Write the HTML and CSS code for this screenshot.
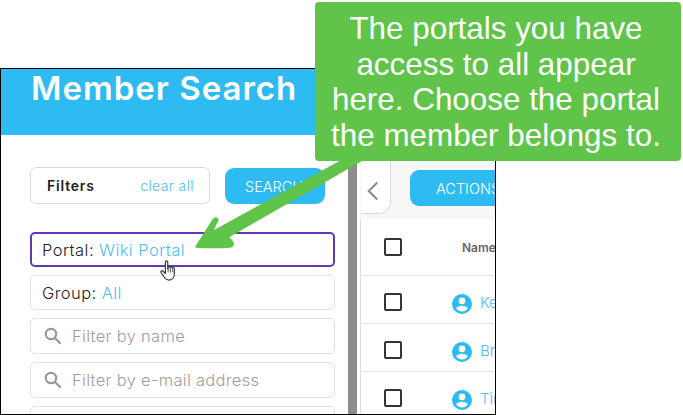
FILE: index.html
```html
<!DOCTYPE html>
<html lang="en">
<head>
    <meta charset="UTF-8">
    <title>Member Search</title>
    <link rel="stylesheet" href="styles.css">
</head>
<body>

    <!-- Recorte da aplicacao -->
    <div class="frame">
        <div class="left-panel">
            <div class="header"><h1>Member Search</h1></div>
            <div class="filters">
                <div class="filters-top">
                    <div class="filters-box">
                        <span class="filters-label">Filters</span>
                        <a href="#" class="clear-link">clear all</a>
                    </div>
                    <a href="#" class="button search-button">SEARCH</a>
                </div>
                <div class="field field-active">Portal: <span class="value">Wiki Portal</span></div>
                <div class="field">Group: <span class="value">All</span></div>
                <div class="field field-search">
                    <svg class="search-icon" viewBox="0 0 18 18"><circle cx="7" cy="7" r="5.2"/><path d="M11 11l5.6 5.6"/></svg>
                    Filter by name
                </div>
                <div class="field field-search">
                    <svg class="search-icon" viewBox="0 0 18 18"><circle cx="7" cy="7" r="5.2"/><path d="M11 11l5.6 5.6"/></svg>
                    Filter by e-mail address
                </div>
                <div class="field"></div>
            </div>
        </div>

        <div class="divider"></div>

        <div class="right-panel">
            <div class="toolbar">
                <div class="collapse-tab">
                    <svg viewBox="0 0 14 24"><path d="M12 2L2 12l10 10"/></svg>
                </div>
                <a href="#" class="button actions-button">ACTIONS</a>
            </div>
            <div class="row row-head">
                <span class="checkbox"></span>
                <span class="name-head">Name</span>
            </div>
            <div class="row">
                <span class="checkbox"></span>
                <svg class="avatar" viewBox="0 0 20 20"><use href="#avatar-icon"/></svg>
                <a href="#" class="member-link">Kevin</a>
            </div>
            <div class="row">
                <span class="checkbox"></span>
                <svg class="avatar" viewBox="0 0 20 20"><use href="#avatar-icon"/></svg>
                <a href="#" class="member-link">Brian</a>
            </div>
            <div class="row">
                <span class="checkbox"></span>
                <svg class="avatar" viewBox="0 0 20 20"><use href="#avatar-icon"/></svg>
                <a href="#" class="member-link">Tim</a>
            </div>
        </div>
    </div>

    <svg class="defs" width="0" height="0">
        <symbol id="avatar-icon" viewBox="0 0 20 20">
            <path fill="#2dbbf2" fill-rule="evenodd" d="M10 0a10 10 0 1 0 0 20a10 10 0 0 0 0-20zM10 3.600a3.300 3.300 0 1 1 0 6.600a3.300 3.300 0 0 1 0-6.600zM10 17.400c-2.600 0-4.800-1.200-6-3.100c.9-1.600 3.800-2.600 6-2.600s5.100 1 6 2.600c-1.200 1.900-3.400 3.100-6 3.100z"/>
        </symbol>
    </svg>

    <!-- Seta e balao verde por cima da tela -->
    <svg class="arrow" viewBox="0 0 683 415">
        <path d="M196 247L213 220Q216 216 218 220L212 232L352 155L362 160L228 237L232 241Q235 246 230 247Q212 248 196 247z" fill="#60c44a" stroke="#60c44a" stroke-width="1.500" stroke-linejoin="round"/>
    </svg>

    <div class="callout">The portals you have access to all appear here. Choose the portal the member belongs to.</div>

    <!-- Cursor de mao -->
    <svg class="hand" viewBox="0 0 20 26">
        <path d="M6 2.500c0-1.800 2.600-1.800 2.600 0v7.500l.4-1.500c.4-1.400 2.400-1 2.300.4l.2-.2c.5-1.200 2.300-.8 2.300.6l.2-.1c.7-.8 2-.3 2 .9v5.400c0 4-2.200 7-5.800 7c-3.300 0-4.600-1.600-6.200-4.200l-2.700-4c-1-1.600 1-3 2.300-1.600l2.400 2.500z" fill="#fff" stroke="#3a3a3a" stroke-width="1.300" stroke-linejoin="round"/>
        <path d="M9 9v5M11.500 9.500v4.500M14 10.500v3.500" stroke="#3a3a3a" stroke-width="1" fill="none"/>
    </svg>

</body>
</html>
```

FILE: styles.css
```css
* {
    margin: 0;
    padding: 0;
    box-sizing: border-box;
}
html, body {
    height: 100%;
    overflow: hidden;
    background-color: white;
    font-family: Inter, Arial, sans-serif;
}
body {
    padding-top: 68px;
}

/* Recorte com borda preta */
.frame {
    display: flex;
    width: 496px;
    height: 347px;
    border: 1px solid #000;
    overflow: hidden;
}

/* Painel de filtros */
.left-panel {
    width: 347px;
    flex-shrink: 0;
}
.header {
    height: 66px;
    padding: 0 0 0 30px;
    background-color: #2dbbf2;
}
.header h1 {
    color: white;
    font-size: 33px;
    font-weight: 600;
    line-height: 38px;
    letter-spacing: 1px;
}
.filters {
    display: flex;
    flex-direction: column;
    gap: 8px;
    padding: 32px 13px 0 29px;
}
.filters-top {
    display: flex;
    gap: 15px;
    margin-bottom: 20px;
}
.filters-box {
    display: flex;
    justify-content: space-between;
    align-items: center;
    width: 180px;
    height: 37px;
    padding: 0 15px 0 16px;
    border: 1px solid #dcdcdc;
    border-radius: 6px;
}
.filters-label {
    font-size: 14px;
    font-weight: 600;
    letter-spacing: 0.8px;
    color: #222;
}
.clear-link {
    font-size: 14px;
    font-weight: 300;
    letter-spacing: 0.4px;
    color: #4dbdf3;
    text-decoration: none;
}
.button {
    display: flex;
    align-items: center;
    height: 36px;
    color: white;
    font-size: 14.500px;
    font-weight: 300;
    background-color: #2dbbf2;
    border-radius: 9px;
    text-decoration: none;
}
.search-button {
    width: 100px;
    margin-top: 1px;
    padding-left: 20px;
}
.field {
    display: flex;
    align-items: center;
    gap: 5px;
    height: 35px;
    padding-left: 11px;
    font-size: 16.500px;
    font-weight: 300;
    letter-spacing: 0.45px;
    color: #222;
    border: 1px solid #e2e2e2;
    border-radius: 5px;
}
.field-active {
    border: 2px solid #6239b0;
    padding-left: 10px;
}
.value {
    color: #4dbdf3;
}
.field-search {
    height: 36px;
    gap: 10px;
    padding-left: 13px;
    letter-spacing: 0.3px;
    color: #a09c9c;
}
.search-icon {
    width: 18px;
    height: 18px;
    fill: none;
    stroke: #999;
    stroke-width: 2.200;
}

/* Barra cinza entre os paineis */
.divider {
    width: 9px;
    flex-shrink: 0;
    background-color: #8c8c8c;
}

/* Tabela de membros */
.right-panel {
    flex-grow: 1;
    min-width: 0;
    overflow: hidden;
    padding-left: 3px;
    background: linear-gradient(to right, white 3px, #dcdcdc 3px, #dcdcdc 4px, transparent 4px);
}
.toolbar {
    display: flex;
    height: 150px;
    padding: 93px 0 0 1px;
    background-color: #f7f7f7;
    gap: 19px;
    align-items: flex-start;
}
.collapse-tab {
    display: flex;
    align-items: center;
    justify-content: flex-start;
    width: 30px;
    height: 53px;
    margin-top: -1px;
    padding: 8px 0 0 6px;
    background-color: white;
    border: 1px solid #dcdcdc;
    border-width: 0 1px 1px 0;
    border-radius: 0 0 12px 0;
    flex-shrink: 0;
}
.collapse-tab svg {
    width: 12px;
    height: 22px;
    fill: none;
    stroke: #8a8a8a;
    stroke-width: 2.400;
}
.actions-button {
    width: 120px;
    flex-shrink: 0;
    margin-top: 8px;
    padding-left: 26px;
}
.row {
    display: flex;
    align-items: center;
    height: 48px;
    padding: 4px 0 0 24px;
    border-top: 1px solid #e2e2e2;
    white-space: nowrap;
}
.row-head {
    height: 56px;
    padding-top: 0;
    border-top: 0;
}
.checkbox {
    width: 18px;
    height: 18px;
    flex-shrink: 0;
    border: 2px solid #3a3232;
    border-radius: 2px;
}
.name-head {
    margin-left: 60px;
    font-size: 12px;
    font-weight: 600;
    color: #666;
}
.avatar {
    width: 20px;
    height: 20px;
    margin: 4px 0 0 50px;
    flex-shrink: 0;
}
.member-link {
    margin: 2px 0 0 8px;
    font-size: 15px;
    font-weight: 300;
    color: #4dbdf3;
    text-decoration: none;
}
.defs {
    position: absolute;
}

/* Balao verde */
.callout {
    position: absolute;
    top: 2px;
    left: 315px;
    width: 366px;
    height: 159px;
    padding: 9px 6px 0 2px;
    color: white;
    font-family: "Liberation Sans", Arial, sans-serif;
    font-size: 31.400px;
    line-height: 35.500px;
    text-align: center;
    background-color: #60c44a;
    border-radius: 4px;
}
.arrow {
    position: absolute;
    top: 0;
    left: 0;
    width: 683px;
    height: 415px;
}
.hand {
    position: absolute;
    top: 259px;
    left: 160px;
    width: 18px;
    height: 25px;
}
```
